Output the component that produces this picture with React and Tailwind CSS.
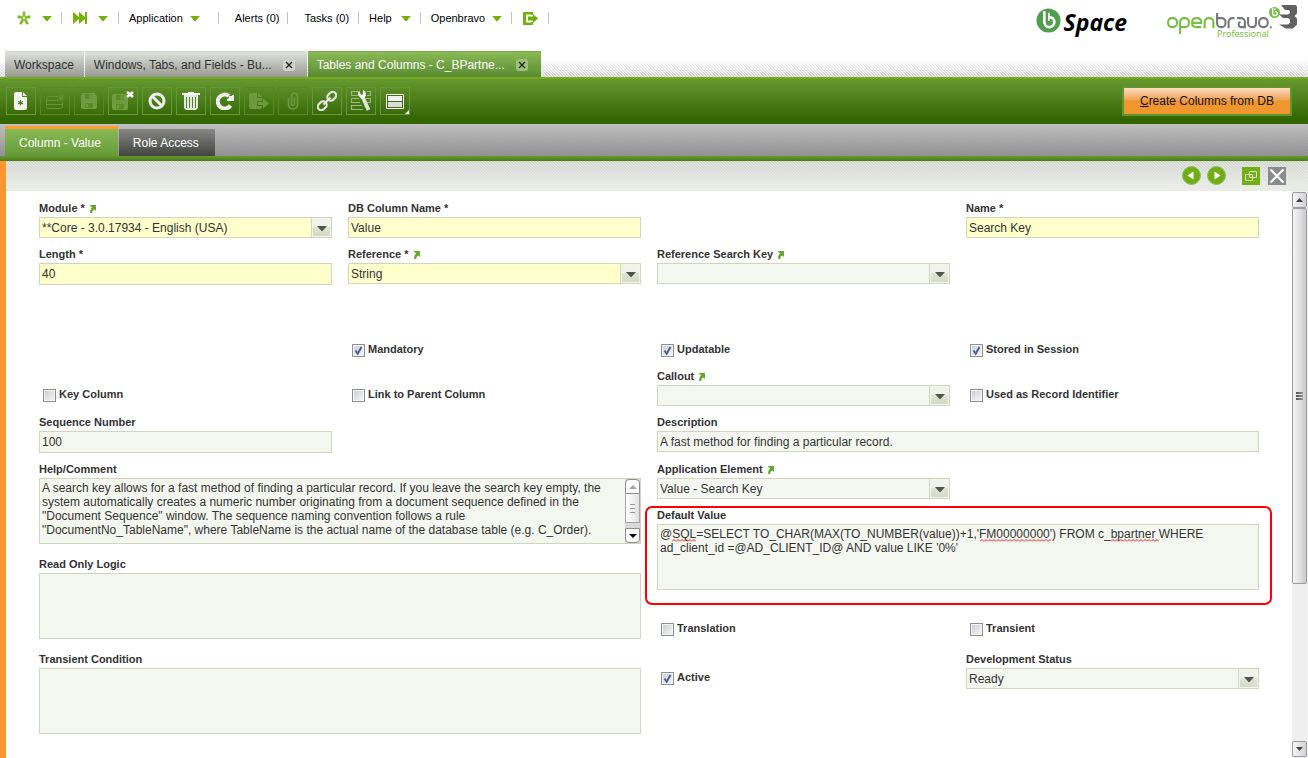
import React from "react";

const HATCH =
  "bg-[linear-gradient(45deg,rgba(0,0,0,0.16)_25%,transparent_25%,transparent_50%,rgba(0,0,0,0.16)_50%,rgba(0,0,0,0.16)_75%,transparent_75%)] bg-[length:3px_3px]";

function Caret() {
  return (
    <svg width="10" height="5" viewBox="0 0 10 5" aria-hidden="true">
      <path d="M0 0h10L8 2 5.8 5H4.2L2 2z" fill="#72b109" />
    </svg>
  );
}

function Sep() {
  return <span className="h-3 w-px bg-[#c3c3c3]" />;
}

function MenuItem({ children, label, caret, className }) {
  return (
    <button type="button" aria-label={label} className={`flex items-center ${className}`}>
      {children}
      {caret && <Caret />}
    </button>
  );
}

function BravoMark({ size, color }) {
  return (
    <svg width={size} height={size} viewBox="0 0 24 24" aria-hidden="true">
      <circle cx="12" cy="12" r="11.5" fill={color} />
      <path d="M8 3v10.500a4.800 4.800 0 1 0 4.800-4.800" fill="none" stroke="#fff" strokeWidth="2.600" />
      <path d="M12.300 4.500v8" fill="none" stroke="#fff" strokeWidth="1.600" />
    </svg>
  );
}

function OpenbravoLogo() {
  return (
    <svg width="134" height="36" viewBox="0 0 134 36" role="img" aria-label="openbravo Professional 3">
      <g fill="none" strokeWidth="2.100">
        <g stroke="#78be43">
          <rect x="1.100" y="15.100" width="8.800" height="9" rx="3.800" />
          <path d="M13.100 31V19a3.900 3.900 0 0 1 3.900-3.900h1a3.900 3.900 0 0 1 3.900 3.900v1.200a3.900 3.900 0 0 1-3.900 3.900h-4" />
          <path d="M34 24.100h-5a3.900 3.900 0 0 1-3.900-3.900V19a3.900 3.900 0 0 1 3.900-3.900h1.500a3.600 3.600 0 0 1 3.600 3.600v1.200H26" />
          <path d="M37.600 25.200V19a3.900 3.900 0 0 1 3.900-3.900h1a3.900 3.900 0 0 1 3.900 3.900v6.200" />
        </g>
        <g stroke="#77787b">
          <path d="M50.100 10v10.200a3.900 3.900 0 0 0 3.900 3.900h.6a3.900 3.900 0 0 0 3.900-3.900V19a3.900 3.900 0 0 0-3.900-3.900H51" />
          <path d="M61.600 25.200V19a3.900 3.900 0 0 1 3.900-3.900h2" />
          <path d="M70 15.100h4a3.900 3.900 0 0 1 3.900 3.900v5.100h-4.500a3 3 0 0 1 0-5.500" />
          <path d="M81.100 14v6.200a3.900 3.900 0 0 0 3.900 3.900c2.800 0 4-1.700 4-3.900V14" />
          <rect x="92.100" y="15.100" width="8.600" height="9" rx="3.800" />
        </g>
      </g>
      <circle cx="103.800" cy="24.300" r="1.100" fill="#77787b" />
      <text x="50" y="34" fontSize="9" fontFamily="'Noto Sans', sans-serif" fill="#78be43">Professional</text>
      <circle cx="107.500" cy="9.500" r="5.500" fill="#78be43" />
      <path d="M105.700 5v5.500a2.200 2.200 0 1 0 2.200-2.200M108 5.200v1.500" fill="none" stroke="#fff" strokeWidth="1.300" />
      <path d="M114 2h14.500l1.500 1.500v7l-2.500 2.500 2.500 2.500v6l-4 4h-7l-7-4h9l2-1.500v-3.500l-2-1.500h-5l-4-3.500h9l2-1.500V8.500L122 7h-4z" fill="#606163" />
    </svg>
  );
}

function TopMenu() {
  return (
    <header className="flex h-[51px] items-start justify-between">
      <nav className="flex h-9 items-center text-[11px] text-black">
        <MenuItem label="Quick create" caret className="gap-[10px] pr-[9px] pl-4">
          <svg width="16" height="16" viewBox="0 0 16 16" aria-hidden="true">
            <path d="M8 8V1.500M8 8L1.500 6.500M8 8l6.500-1.500M8 8l-3.800 6.300M8 8l3.800 6.300" stroke="#a3cd64" strokeWidth="3" fill="none" />
            <path d="M8 8V2M8 8L2 6.600M8 8l6-1.400M8 8l-3.500 5.800M8 8l3.500 5.800" stroke="#7db51e" strokeWidth="1.600" fill="none" />
            <circle cx="8" cy="8" r="1.200" fill="#e4f1d0" />
          </svg>
        </MenuItem>
        <Sep />
        <MenuItem label="Quick launch" caret className="gap-[10px] px-[10px]">
          <svg width="16" height="12" viewBox="0 0 16 12" aria-hidden="true">
            <path d="M1 0l6 5V0l6 5V0h2v12h-2V7l-6 5V7l-6 5z" fill="#72b109" />
          </svg>
        </MenuItem>
        <Sep />
        <MenuItem caret className="gap-[7px] pr-[18px] pl-[10px]">Application</MenuItem>
        <Sep />
        <MenuItem className="pr-2 pl-4">Alerts (0)</MenuItem>
        <Sep />
        <MenuItem className="pr-[9px] pl-4">Tasks (0)</MenuItem>
        <Sep />
        <MenuItem caret className="gap-[9px] pr-[9px] pl-[10px]">Help</MenuItem>
        <Sep />
        <MenuItem caret className="gap-[7px] pr-[9px] pl-[10px]">Openbravo</MenuItem>
        <Sep />
        <MenuItem label="Log out" className="pr-[10px] pl-[11px]">
          <svg width="15" height="13" viewBox="0 0 15 13" aria-hidden="true">
            <path d="M0 0h10v3H8.500V2.500H3v8h5.500V10H10v3H0z" fill="#72b109" />
            <path d="M5 4.500h5V2l5 4.500L10 11V8.500H5z" fill="#72b109" />
          </svg>
        </MenuItem>
        <Sep />
      </nav>
      <div className="flex items-start gap-10 pr-[7px]">
        <div className="flex items-start gap-[3px] pt-2">
          <BravoMark size={25} color="#4f9f4a" />
          <span className="font-['Open_Sans',sans-serif] text-[23px] leading-7 font-bold text-black italic">Space</span>
        </div>
        <div className="pt-[3px]">
          <OpenbravoLogo />
        </div>
      </div>
    </header>
  );
}

function CloseButton({ label, className }) {
  return (
    <button type="button" aria-label={label} className={`flex size-3 items-center justify-center rounded-[3px] ${className}`}>
      <svg width="8" height="8" viewBox="0 0 8 8" aria-hidden="true">
        <path d="M1 1l6 6M7 1L1 7" stroke="#222" strokeWidth="1.400" />
      </svg>
    </button>
  );
}

function WindowTabs() {
  const grey = "bg-linear-to-b from-[#dfe2dc] to-[#979a93] text-[#333] border-t border-[#d2d4cf]";
  return (
    <div className={`bg-white ${HATCH}`}>
      <div className="flex h-[26px] gap-px bg-linear-to-b from-white from-30% to-white/0 pl-[5px] text-[12px]">
        <div className={`flex items-center pr-[10px] pl-[9px] ${grey}`}>
          <button type="button">Workspace</button>
        </div>
        <div className={`flex items-center gap-[11px] pr-3 pl-[9px] ${grey}`}>
          <button type="button">Windows, Tabs, and Fields - Bu...</button>
          <CloseButton label="Close Windows, Tabs, and Fields" className="bg-[#d0d3cd]" />
        </div>
        <div className="flex items-center gap-[11px] border-t border-[#7ba64e] bg-linear-to-b from-[#8aba55] to-[#5a8b31] pr-[13px] pl-[9px] text-white">
          <button type="button">Tables and Columns - C_BPartne...</button>
          <CloseButton label="Close Tables and Columns" className="bg-[#9fc37b]" />
        </div>
      </div>
    </div>
  );
}

const Doc = () => (
  <svg width="14" height="18" viewBox="0 0 14 18" aria-hidden="true">
    <path d="M2 0h6v5h5v11a2 2 0 0 1-2 2H2a2 2 0 0 1-2-2V2a2 2 0 0 1 2-2z" fill="#f2f2f0" />
    <path d="M9 0l4 4H9z" fill="#fff" />
    <path d="M6.500 8v5.500M4 9.500l5 2.500M9 9.500L4 12" stroke="#4b7d1a" strokeWidth="1.200" />
  </svg>
);
const NewRow = () => (
  <svg width="19" height="15" viewBox="0 0 19 15" fill="none" stroke="#659435" aria-hidden="true">
    <path d="M12 2.500H2.500a2 2 0 0 0-2 2v8a2 2 0 0 0 2 2h12a2 2 0 0 0 2-2V8M0.500 6.500H12M0.500 10.500h16" />
    <path d="M15 0.500v7M11.500 4h7M12.500 1.500l5 5M17.500 1.500l-5 5" />
  </svg>
);
const Disk = () => (
  <>
    <path d="M2 0h11l3 3v11a2 2 0 0 1-2 2H2a2 2 0 0 1-2-2V2a2 2 0 0 1 2-2z" fill="#6f9c41" />
    <path d="M4 1h7v5H4zM4 10h8v5H4z" fill="#5a8a29" />
    <path d="M8.500 1.500h2v4h-2zM5 11h2v3H5z" fill="#6f9c41" />
  </>
);
const Save = () => (
  <svg width="16" height="16" viewBox="0 0 16 16" aria-hidden="true"><Disk /></svg>
);
const SaveClose = () => (
  <svg width="22" height="20" viewBox="0 0 22 20" aria-hidden="true">
    <g transform="translate(0 3)"><Disk /></g>
    <path d="M15 1l6 5M21 1l-6 5" stroke="#fff" strokeWidth="2.600" />
  </svg>
);
const Undo = () => (
  <svg width="18" height="18" viewBox="0 0 18 18" fill="none" stroke="#eeeeec" strokeWidth="3" aria-hidden="true">
    <circle cx="9" cy="9" r="7" />
    <path d="M4 4l10 10" />
  </svg>
);
const Trash = () => (
  <svg width="18" height="18" viewBox="0 0 18 18" aria-hidden="true">
    <path d="M6 0h6v1h6v2H0V1h6z" fill="#f4f4f2" />
    <path d="M2 3h14v13l-2 2H4l-2-2z" fill="#e5e5e2" />
    <path d="M4.500 5v11M7.500 5v11M10.500 5v11M13.500 5v11" stroke="#568625" />
  </svg>
);
const Refresh = () => (
  <svg width="18" height="18" viewBox="0 0 18 18" aria-hidden="true">
    <path d="M14.500 13.500A7 7 0 1 1 13 4" fill="none" stroke="#eeeeec" strokeWidth="4" />
    <path d="M18 3v6h-7V7l2-1V4h3V3z" fill="#f4f4f2" />
  </svg>
);
const Export = () => (
  <svg width="20" height="16" viewBox="0 0 20 16" fill="#6b993c" aria-hidden="true">
    <path d="M2 0h6v5h5v3H8v5h5v1a2 2 0 0 1-2 2H2a2 2 0 0 1-2-2V2a2 2 0 0 1 2-2zM9 0l4 4H9z" />
    <path d="M9 9h5V5.500l6 5-6 5V12H9z" />
  </svg>
);
const Clip = () => (
  <svg width="12" height="18" viewBox="0 0 12 18" fill="none" stroke="#6b993c" strokeWidth="1.700" aria-hidden="true">
    <path d="M1.500 6v6.500a4.500 4.500 0 0 0 9 0V4a3 3 0 0 0-6 0v8a1.500 1.500 0 0 0 3 0V5.500" />
  </svg>
);
const Link = () => (
  <svg width="20" height="20" viewBox="0 0 20 20" fill="none" stroke="#e6e6e4" strokeWidth="2.200" aria-hidden="true">
    <g transform="rotate(-45 10 10)">
      <rect x="-1.500" y="6.500" width="9.500" height="7" rx="3.300" />
      <rect x="12" y="6.500" width="9.500" height="7" rx="3.300" />
      <path d="M5 10h10" />
    </g>
  </svg>
);
const Tools = () => (
  <svg width="22" height="22" viewBox="0 0 22 22" aria-hidden="true">
    <path d="M8 1.500H1.500v4H8M17 1.500h3.500v4H17M9 8.500H1.500v4H10M16 8.500h4.500v4H17M12 15.500H1.500v4H13" fill="none" stroke="#9db783" strokeWidth="1.200" />
    <path d="M12.500 6.500L18.500 20" stroke="#e2e2e0" strokeWidth="3.800" />
    <path d="M8 1l0 4 3 3.500h3l2-3L15.500 1.500 13 0v4L11 5 9.500 1.500z" fill="#f2f2f0" />
  </svg>
);
const Layout = () => (
  <svg width="18" height="15" viewBox="0 0 18 15" aria-hidden="true">
    <path d="M0.500 0.500h17v14H0.500z" fill="#3d6f0c" stroke="#fff" />
    <path d="M2 2h14v5H2z" fill="#f1f1f1" />
    <path d="M2 8h14v5H2z" fill="#dcdcdc" />
  </svg>
);

const TOOLS = [
  { label: "New record", Icon: Doc },
  { label: "New in grid", Icon: NewRow, off: true },
  { label: "Save", Icon: Save, off: true },
  { label: "Save and close", Icon: SaveClose },
  { label: "Undo", Icon: Undo },
  { label: "Delete", Icon: Trash },
  { label: "Refresh", Icon: Refresh },
  { label: "Export", Icon: Export, off: true },
  { label: "Attachments", Icon: Clip, off: true },
  { label: "Linked items", Icon: Link },
  { label: "Manage views", Icon: Tools },
  { label: "Change layout", Icon: Layout, corner: true },
];

function Toolbar() {
  return (
    <div className="flex h-[47px] items-center justify-between border-t-2 border-[#76aa1f] bg-linear-to-b from-[#66992f] to-[#336500] to-90% pr-4 pb-px pl-[6px]">
      <div className="flex gap-1">
        {TOOLS.map(({ label, Icon, off, corner }) => (
          <button
            key={label}
            type="button"
            aria-label={label}
            disabled={off}
            className={`relative flex h-7 w-[30px] items-center justify-center border ${off ? "border-[#588726]" : "border-[#659639]"}`}
          >
            <Icon />
            {corner && (
              <svg className="absolute right-0 bottom-0" width="4" height="4" viewBox="0 0 4 4" aria-hidden="true">
                <path d="M4 0v4H0z" fill="#fff" />
              </svg>
            )}
          </button>
        ))}
      </div>
      <button
        type="button"
        className="h-[30px] border-2 border-[#61962c] bg-linear-to-b from-[#fbdcbd] via-[#f2a356] via-45% to-[#f0962f] to-50% px-4 text-[12px] text-[#111]"
      >
        <span className="underline">C</span>reate Columns from DB
      </button>
    </div>
  );
}

function SubTabs() {
  return (
    <div className={HATCH}>
      <div className="flex h-8 items-end gap-px bg-linear-to-b from-[#c0c0c0] to-[#7d7d7d]/80 pl-[5px] text-[12px] text-white">
        <button type="button" className="h-[30px] border-t-[3px] border-[#ff9b30] bg-linear-to-b from-[#8aba55] to-[#669a38] pr-[17px] pl-[14px]">
          Column - Value
        </button>
        <button type="button" className="h-[27px] bg-linear-to-b from-[#878886] to-[#424440] pr-4 pl-[14px]">
          Role Access
        </button>
      </div>
      <div className="h-[5px] bg-linear-to-b from-[#67992f] to-[#4a7d17]" />
    </div>
  );
}

function RecordBar() {
  return (
    <div className={`bg-[#e6e9e3] ${HATCH}`}>
      <div className="flex h-[30px] items-center justify-end bg-linear-to-b from-[#e3e6e0]/50 to-[#e9ebe5] to-80% pr-[22px] pb-px">
        <div className="flex gap-[6px]">
          {["Previous record", "Next record"].map((label, i) => (
            <button key={label} type="button" aria-label={label}>
              <svg width="19" height="19" viewBox="0 0 19 19" aria-hidden="true">
                <circle cx="9.500" cy="9.500" r="9" fill="#6fae14" stroke="#93b96a" strokeWidth="1" />
                <path d={i ? "M7.500 5.500l6 4-6 4z" : "M11.500 5.500l-6 4 6 4z"} fill="#fff" />
              </svg>
            </button>
          ))}
        </div>
        <button type="button" aria-label="Restore" className="ml-4">
          <svg width="18" height="18" viewBox="0 0 18 18" aria-hidden="true">
            <path d="M0 0h18v18H0z" fill="#73ad17" />
            <path d="M3.500 7.500h7v6h-7zM7.500 4.500h7v6h-7z" fill="none" stroke="#d8ecb8" />
          </svg>
        </button>
        <button type="button" aria-label="Close form" className="ml-2">
          <svg width="18" height="18" viewBox="0 0 18 18" aria-hidden="true">
            <path d="M0 0h18v18H0z" fill="#8a8a8a" />
            <path d="M2.500 2.500l13 13M15.500 2.500l-13 13" stroke="#fff" strokeWidth="2.200" />
          </svg>
        </button>
      </div>
    </div>
  );
}

function LinkArrow() {
  return (
    <svg width="7" height="8" viewBox="0 0 7 8" aria-hidden="true">
      <path d="M0.500 0H7v6L5.300 4.500C3.800 5.300 3.300 6.300 3.300 8H1.300C0.800 6 1.300 4.300 3 2.500z" fill="#62aa2f" />
    </svg>
  );
}

const BOX = "w-full rounded-none border border-[#cdd7bb] px-[2px] text-[12px] text-[#333] outline-none";
const PLAIN = "bg-[#f3f7ef]";
const REQUIRED = "bg-[#ffffcc]";

function Field({ id, label, link, cell, children }) {
  return (
    <div className={`min-w-0 ${cell}`}>
      <div className="flex h-[17px] items-center gap-1 text-[11px] font-bold text-[#333]">
        <label htmlFor={id}>{label}</label>
        {link && (
          <a href="#" aria-label={`Open ${label}`}>
            <LinkArrow />
          </a>
        )}
      </div>
      {children}
    </div>
  );
}

function TextField({ id, label, value, required, cell, height = "h-[22px]" }) {
  return (
    <Field id={id} label={label} cell={cell}>
      <input id={id} type="text" defaultValue={value} className={`block ${height} ${BOX} ${required ? REQUIRED : PLAIN}`} />
    </Field>
  );
}

function SelectField({ id, label, value, required, link, cell }) {
  return (
    <Field id={id} label={label} link={link} cell={cell}>
      <div className="relative">
        <select id={id} defaultValue={value} className={`block h-[21px] appearance-none ${BOX} ${required ? REQUIRED : PLAIN}`}>
          <option value={value}>{value}</option>
        </select>
        <span className="pointer-events-none absolute inset-y-0 right-0 flex w-[21px] items-center justify-center border border-[#cdd7bb] bg-linear-to-b from-[#f1f3ea] from-45% via-[#dfe4d3] via-50% to-[#d3d9c4] pt-[2px] shadow-[inset_0_0_0_1px_#f3f5ec]">
          <svg width="10" height="5" viewBox="0 0 10 5" aria-hidden="true">
            <path d="M0 0h10L5.500 5h-1z" fill="#55554f" />
          </svg>
        </span>
      </div>
    </Field>
  );
}

function AreaField({ id, label, value, cell, children, pad = "px-[2px]" }) {
  return (
    <Field id={id} label={label} cell={cell}>
      <div className={`relative flex h-[66px] border border-[#cdd7bb] ${PLAIN}`}>
        <textarea
          id={id}
          defaultValue={value}
          spellCheck={false}
          className={`min-w-0 flex-1 resize-none overflow-hidden pt-[2px] text-[12px] leading-[14px] text-[#333] outline-none ${pad}`}
        />
        {children}
      </div>
    </Field>
  );
}

function CheckField({ id, label, checked, cell }) {
  return (
    <div className={`flex items-start gap-[3px] pt-5 pl-1 ${cell}`}>
      <span className="relative mt-px size-[13px]">
        <input
          id={id}
          type="checkbox"
          defaultChecked={checked}
          className="peer block size-[13px] appearance-none border border-[#8e8f8f] bg-linear-to-br from-[#c9cdd3] to-[#f8f8f8] shadow-[inset_0_0_0_1px_#f4f4f4]"
        />
        <svg className="pointer-events-none absolute inset-0 hidden peer-checked:block" width="13" height="13" viewBox="0 0 13 13" aria-hidden="true">
          <path d="M3.500 6.500l2.200 3.200L9.500 3" fill="none" stroke="#4a5f97" strokeWidth="2" />
        </svg>
      </span>
      <label htmlFor={id} className="text-[11px] leading-[13px] font-bold text-[#333]">
        {label}
      </label>
    </div>
  );
}

function HelpScroll() {
  return (
    <div className="flex w-[15px] flex-col bg-[#d9d9d9]" aria-hidden="true">
      <div className="flex h-[15px] items-center justify-center rounded-t-[4px] border border-[#8e8e8e] bg-[#fbfbfb]">
        <svg width="8" height="4" viewBox="0 0 8 4"><path d="M0 4l4-4 4 4z" fill="#a5a5a5" /></svg>
      </div>
      <div className="flex h-[29px] flex-col items-center justify-center gap-[3px] border-x border-b border-[#a5a5a5] bg-linear-to-r from-white to-[#e2e2e2]">
        <span className="h-px w-[5px] bg-[#999]" />
        <span className="h-px w-[5px] bg-[#999]" />
        <span className="h-px w-[5px] bg-[#999]" />
      </div>
      <div className="mt-auto flex h-[15px] items-center justify-center rounded-b-[4px] border border-[#8e8e8e] bg-[#fbfbfb]">
        <svg width="8" height="4" viewBox="0 0 8 4"><path d="M0 0l4 4 4-4z" fill="#000" /></svg>
      </div>
    </div>
  );
}

function Squiggle({ className }) {
  return (
    <svg className={`pointer-events-none absolute top-[14px] h-[3px] ${className}`} aria-hidden="true">
      <defs>
        <pattern id="squiggle" width="4" height="3" patternUnits="userSpaceOnUse">
          <path d="M0 2.500l2-2 2 2" fill="none" stroke="#ee1c1c" />
        </pattern>
      </defs>
      <rect width="100%" height="3" fill="url(#squiggle)" />
    </svg>
  );
}

const HELP =
  'A search key allows for a fast method of finding a particular record. If you leave the search key empty, the system automatically creates a numeric number originating from a document sequence defined in the "Document Sequence" window. The sequence naming convention follows a rule "DocumentNo_TableName", where TableName is the actual name of the database table (e.g. C_Order).';
const SQL =
  "@SQL=SELECT TO_CHAR(MAX(TO_NUMBER(value))+1,'FM00000000') FROM c_bpartner WHERE ad_client_id =@AD_CLIENT_ID@ AND value LIKE '0%'";

function Form() {
  return (
    <form className="grid min-w-0 flex-1 grid-cols-4 grid-rows-[46px_46px_31px_45px_46px_47px_46px_49px_46px_49px_95px] content-start gap-x-4 px-[33px] pt-[9px]">
      <SelectField id="module" label="Module *" value="**Core - 3.0.17934 - English (USA)" required link cell="col-start-1 row-start-1" />
      <TextField id="dbname" label="DB Column Name *" value="Value" required height="h-[21px]" cell="col-start-2 row-start-1" />
      <TextField id="name" label="Name *" value="Search Key" required height="h-[21px]" cell="col-start-4 row-start-1" />
      <TextField id="length" label="Length *" value="40" required cell="col-start-1 row-start-2" />
      <SelectField id="reference" label="Reference *" value="String" required link cell="col-start-2 row-start-2" />
      <SelectField id="refkey" label="Reference Search Key" value="" link cell="col-start-3 row-start-2" />

      <CheckField id="mandatory" label="Mandatory" checked cell="col-start-2 row-start-4" />
      <CheckField id="updatable" label="Updatable" checked cell="col-start-3 row-start-4" />
      <CheckField id="stored" label="Stored in Session" checked cell="col-start-4 row-start-4" />
      <CheckField id="key" label="Key Column" cell="col-start-1 row-start-5" />
      <CheckField id="parent" label="Link to Parent Column" cell="col-start-2 row-start-5" />
      <SelectField id="callout" label="Callout" value="" link cell="col-start-3 row-start-5" />
      <CheckField id="identifier" label="Used as Record Identifier" cell="col-start-4 row-start-5" />

      <TextField id="sequence" label="Sequence Number" value="100" cell="col-start-1 row-start-6" />
      <TextField id="description" label="Description" value="A fast method for finding a particular record." height="h-[21px]" cell="col-span-2 col-start-3 row-start-6" />
      <AreaField id="help" label="Help/Comment" value={HELP} pad="pr-3 pl-[2px]" cell="col-span-2 col-start-1 row-span-2 row-start-7">
        <HelpScroll />
      </AreaField>
      <SelectField id="element" label="Application Element" value="Value - Search Key" link cell="col-start-3 row-start-7" />
      <div className="relative col-span-2 col-start-3 row-span-2 row-start-8">
        <AreaField id="default" label="Default Value" value={SQL} cell="">
          <Squiggle className="left-[14px] w-[24px]" />
          <Squiggle className="left-[322px] w-[71px]" />
          <Squiggle className="left-[453px] w-[48px]" />
        </AreaField>
        <span className="pointer-events-none absolute -top-px -right-[13px] -left-[12px] h-[99px] rounded-[7px] border-2 border-[#ff0000]" />
      </div>
      <AreaField id="readonly" label="Read Only Logic" value="" cell="col-span-2 col-start-1 row-span-2 row-start-9" />
      <CheckField id="translation" label="Translation" cell="col-start-3 row-start-10" />
      <CheckField id="transient" label="Transient" cell="col-start-4 row-start-10" />
      <AreaField id="condition" label="Transient Condition" value="" cell="col-span-2 col-start-1 row-start-11" />
      <CheckField id="active" label="Active" checked cell="col-start-3 row-start-11" />
      <SelectField id="status" label="Development Status" value="Ready" cell="col-start-4 row-start-11" />
    </form>
  );
}

function PageScroll() {
  const end = "flex h-4 shrink-0 items-center justify-center rounded-[2px] border border-[#9a9b9e] bg-linear-to-r from-[#f6f6f6] to-[#d2d2d2]";
  return (
    <div className="flex w-4 shrink-0 flex-col border-r border-[#f4f4f4] bg-[#efefef] py-px" aria-hidden="true">
      <div className={end}>
        <svg width="7" height="4" viewBox="0 0 7 4"><path d="M0 4l3.500-4L7 4z" fill="#444" /></svg>
      </div>
      <div className="flex flex-[375_1_0%] flex-col items-center justify-center gap-px rounded-[2px] border border-[#9a9b9e] bg-linear-to-r from-[#f4f4f4] via-[#e2e2e2] to-[#cacaca]">
        <span className="h-[2px] w-[7px] bg-linear-to-r from-[#555] to-[#999]" />
        <span className="h-[2px] w-[7px] bg-linear-to-r from-[#555] to-[#999]" />
        <span className="h-[2px] w-[7px] bg-linear-to-r from-[#555] to-[#999]" />
      </div>
      <div className="flex-[158_1_0%]" />
      <div className={end}>
        <svg width="7" height="4" viewBox="0 0 7 4"><path d="M0 0l3.500 4L7 0z" fill="#444" /></svg>
      </div>
    </div>
  );
}

export default function App() {
  return (
    <div className="flex min-h-screen flex-col bg-white font-['Liberation_Sans',Arial,sans-serif]">
      <TopMenu />
      <WindowTabs />
      <Toolbar />
      <SubTabs />
      <main className="flex flex-1 flex-col border-l-[6px] border-[#ff9632]">
        <RecordBar />
        <div className="flex flex-1">
          <Form />
          <PageScroll />
        </div>
      </main>
    </div>
  );
}
